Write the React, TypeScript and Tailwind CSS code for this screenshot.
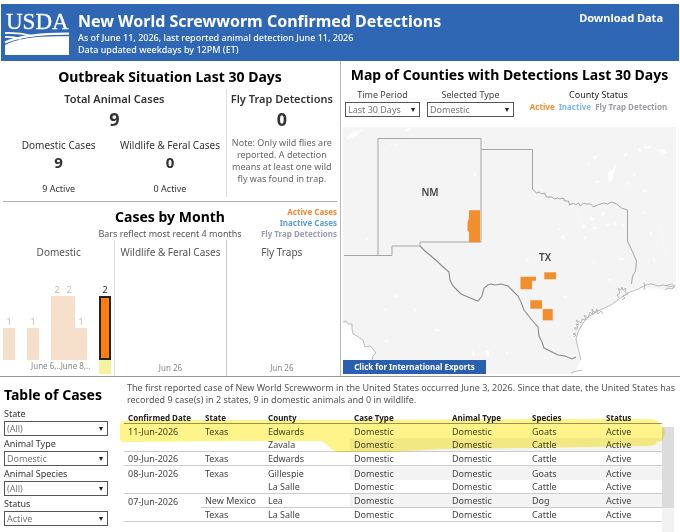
import React from "react";

const active = "#f28e2b";

const bars = [
  { day: "June 3", count: 1 },
  { day: "June 4", count: 0 },
  { day: "June 5", count: 1 },
  { day: "June 6", count: 0 },
  { day: "June 7", count: 2 },
  { day: "June 8", count: 2 },
  { day: "June 9", count: 1 },
  { day: "June 10", count: 0 },
  { day: "June 11", count: 2, selected: true },
];

const rows = [
  { date: "11-Jun-2026", state: "Texas", county: "Edwards", species: "Goats", line: "none" },
  { date: "", state: "", county: "Zavala", species: "Cattle", line: "full" },
  { date: "09-Jun-2026", state: "Texas", county: "Edwards", species: "Cattle", line: "full" },
  { date: "08-Jun-2026", state: "Texas", county: "Gillespie", species: "Goats", line: "none" },
  { date: "", state: "", county: "La Salle", species: "Cattle", line: "full" },
  { date: "07-Jun-2026", state: "New Mexico", county: "Lea", species: "Dog", line: "partial" },
  { date: "", state: "Texas", county: "La Salle", species: "Cattle", line: "full" },
];

const headings = ["Confirmed Date", "State", "County", "Case Type", "Animal Type", "Species", "Status"];

const tableFilters = [
  { id: "state", label: "State", value: "(All)" },
  { id: "animal-type", label: "Animal Type", value: "Domestic" },
  { id: "animal-species", label: "Animal Species", value: "(All)" },
  { id: "status", label: "Status", value: "Active" },
];

function Select({ id, value }: { id: string; value: string }) {
  return (
    <div className="relative">
      <select
        id={id}
        defaultValue={value}
        className="block h-[15px] w-full appearance-none rounded-none border border-[#555] bg-white pr-4 pl-[2px] text-[9px] leading-[13px] text-[#777]"
      >
        <option>{value}</option>
      </select>
      <svg viewBox="0 0 4 4" className="pointer-events-none absolute top-[6px] right-[5px] h-1 w-1">
        <path d="M0 0h4L2 4z" fill="#222" />
      </svg>
    </div>
  );
}

function Logo() {
  return (
    <svg viewBox="0 0 64 45" className="h-[45px] w-16 shrink-0 overflow-visible" role="img" aria-label="USDA">
      <text x="1" y="18" fill="#fff" stroke="#fff" strokeWidth="0.3" fontFamily="Liberation Serif, serif" fontSize="23">
        USDA
      </text>
      <path d="M0 34c12-6.500 31-9.500 64-8.700V44H0z" fill="#fff" />
      <g fill="none" stroke="#fff">
        <path d="M0 31.500C13 25.500 32 22.500 64 22.700" strokeWidth="2.200" />
        <path d="M0 22c11-.3 20 1 28 3" strokeWidth="1.800" />
        <path d="M0 26c6-.2 11 .5 16 2" strokeWidth="1.800" />
      </g>
    </svg>
  );
}

function Header() {
  return (
    <header className="mx-px mt-1 flex h-[57px] items-start bg-[#2f67b5] text-white">
      <div className="pt-[7px] pl-1">
        <Logo />
      </div>
      <div className="grow pt-[6px] pl-[9px]">
        <h1 className="text-[16px] leading-[22px] font-bold">New World Screwworm Confirmed Detections</h1>
        <p className="text-[9px] leading-[12px] font-medium">As of June 11, 2026, last reported animal detection June 11, 2026</p>
        <p className="text-[9px] leading-[12px] font-medium">Data updated weekdays by 12PM (ET)</p>
      </div>
      <a href="#download" className="pt-[6px] pr-4 text-[11px] leading-4 font-bold">
        Download Data
      </a>
    </header>
  );
}

function Outbreak() {
  return (
    <section className="mx-[3px] border-b border-[#b0b0b0] pt-1 pb-1 text-center text-[#333]">
      <h2 className="text-[14px] leading-6 font-bold text-black">Outbreak Situation Last 30 Days</h2>
      <div className="grid grid-cols-[2fr_1fr]">
        <div>
          <h3 className="text-[11px] leading-5 font-semibold">Total Animal Cases</h3>
          <p className="text-[18px] leading-5 font-bold">9</p>
          <div className="mt-2 grid grid-cols-2">
            <div>
              <h4 className="text-[10px] leading-4">Domestic Cases</h4>
              <p className="text-[15px] leading-[18px] font-bold">9</p>
              <p className="mt-[10px] text-[9px] leading-4">9 Active</p>
            </div>
            <div>
              <h4 className="text-[10px] leading-4">Wildlife &amp; Feral Cases</h4>
              <p className="text-[15px] leading-[18px] font-bold">0</p>
              <p className="mt-[10px] text-[9px] leading-4">0 Active</p>
            </div>
          </div>
        </div>
        <div className="border-l border-[#ddd]">
          <h3 className="text-[11px] leading-5 font-semibold whitespace-nowrap">Fly Trap Detections</h3>
          <p className="text-[18px] leading-5 font-bold">0</p>
          <p className="mt-2 px-1 text-[9px] leading-[12px] text-[#666]">
            Note: Only wild flies are reported. A detection means at least one wild fly was found in trap.
          </p>
        </div>
      </div>
    </section>
  );
}

function CasesByMonth() {
  return (
    <section className="mx-[3px] text-[#555]">
      <div className="grid grid-cols-[1fr_auto_1fr]">
        <div className="col-start-2 pt-1 text-center">
          <h2 className="text-[14px] leading-[22px] font-bold text-black">Cases by Month</h2>
          <p className="text-[9px] leading-[12px]">Bars reflect most recent 4 months</p>
        </div>
        <ul className="pt-1 text-right text-[8px] leading-[11px] font-bold whitespace-nowrap">
          <li className="text-[#f58634]">Active Cases</li>
          <li className="text-[#5a9fd0]">Inactive Cases</li>
          <li className="text-[#9a9db0]">Fly Trap Detections</li>
        </ul>
      </div>
      <div className="grid h-[136px] grid-cols-3 text-center">
        <div className="flex flex-col">
          <h3 className="pt-1 text-[10px] leading-4">Domestic</h3>
          <div className="flex grow items-end">
            {bars.map((bar) => (
              <div key={bar.day} className="w-3 shrink-0">
                {bar.count > 0 && (
                  <>
                    <p className={bar.selected ? "text-[9px] leading-3 text-[#222]" : "text-[9px] leading-3 text-[#bbb]"}>{bar.count}</p>
                    <div
                      className={bar.selected ? "border-2 border-[#222] bg-[#ff7f0e]" : "bg-[#f6dfcb]"}
                      style={{ height: bar.count * 32 }}
                    />
                  </>
                )}
              </div>
            ))}
          </div>
          <div className="flex h-4 justify-between pr-[3px] pl-7 text-[8px] leading-3 text-[#888]">
            <span className="whitespace-nowrap">June 6,..June 8,..</span>
            <span className="h-[14px] w-3 bg-[#f5f3a0]" />
          </div>
        </div>
        <div className="flex flex-col justify-between border-l border-[#ddd]">
          <h3 className="pt-1 text-[10px] leading-4">Wildlife &amp; Feral Cases</h3>
          <p className="pb-[2px] text-[8px] leading-[13px] text-[#888]">Jun 26</p>
        </div>
        <div className="flex flex-col justify-between border-l border-[#ccc]">
          <h3 className="pt-1 text-[10px] leading-4">Fly Traps</h3>
          <p className="pb-[2px] text-[8px] leading-[13px] text-[#888]">Jun 26</p>
        </div>
      </div>
    </section>
  );
}

function CountyMap() {
  return (
    <svg viewBox="0 0 333 247" className="block w-full bg-[#f4f4f4]" role="img" aria-label="Map of counties with detections">
      {/* Gulf and Pacific water */}
      <path
        d="M336 163l-8-1-6 1-12-2-8 1-7-2-19 12-12 8-20 11-9 15-2 7 2 12 3 9-3 5-5 8-3 1h109z"
        fill="#fff"
      />
      <path d="M0 195l8 2 2 9 10 7 2 7 8 1 3 5-4 7v14H0z" fill="#fff" />
      {/* lakes */}
      <g fill="#fff">
        <path d="M4 10l5-5 11-3-6 6-9 4zM42 16l9 2 8-2-7 3zM62 3l7-3-3 5zM131 46l2 2-2 1zM14 54h4v1zM23 110l3 2-3 1zM67 89l1 4-1-2z" />
        <path d="M265 46l5-4 3-5-2 10-3 8-3-2zM281 27l4-2-3 6zM295 24l2-4 2 5zM299 20l7-1 3 2-5 1zM311 20l5 3 6-1 2 5-6-2zM244 37l3-2-1 3zM250 30l4-1-2 3zM252 55l5-2-3 3zM282 57l5-1-3 2zM289 48l4-3-2 4zM300 62l5 2-5 1zM258 87l4-3-1 5zM248 90l4 3-5 1zM239 98l4 1-3 3zM250 99l5 2-5 2zM262 98l4-1-2 3zM272 95l2 4-3-2zM280 97l3 3-4-1zM218 111l3-4 1 6zM215 101l4 1-3 1zM240 111l3-2-1 4zM300 83l3 5-3-2zM306 104l4 4-3-1z" />
        <path d="M52 167l3 3-3 1zM71 182l4 1-3 1zM91 202l7 1-4 1zM42 213l4 1-3 1zM129 223l3 4-2 3zM143 224h3v6h-2zM183 133l3-2-1 3zM249 133l4 4-3-1zM276 131l6 1-4 1zM287 120l3 4-2-1zM222 138l3 3-2-1zM311 130l2 6-3-3zM265 151l4 2-3 1zM221 168l3 2-3 1zM207 229l4 1-3 1zM42 181l2 4-3-2zM164 223l1 4-2-1z" />
      </g>
      {/* rivers */}
      <g fill="none" stroke="#f8f8f8" strokeWidth="0.8">
        <path d="M1 15l7-8 10-3M190 86l11 12 9 7M229 72l9 22 9 11M263 110l12 23 17 20M300 77l11 12 8 18 4 21M298 126l11 14 13 11M218 125l18 15 12 17" />
      </g>
      {/* coast */}
      <g fill="none" stroke="#aaa" strokeWidth="0.8">
        <path d="M0 195l3-1 2 3 4 0 0 5 1 5 4 2 6 4 2 7 5-1 3 3 3 4-3 3-1 4" />
        <path d="M238 233l-3-12-2-9 2-7 5-9 5-6 10-6 13-6 8-6 9-6 10-4 4-2 4-2 5-1 4 1 3 1 5-1 5 1 6 1" />
        <path d="M234 203l-3-2 4 0-2-4 3 1-3-5 5 3 1-4 4 1-2-5 4 3 2-6 3 3-1-6 3 4 2-4 1 5 3-3 2 3M276 171l-2-3 3-2-2-5 3 2 1-3 1 3 3-2-1 4 3 2-5 2 2 2-3 2M300 156l2 1-1 6M322 159l6-2 4 2-3 3-4-1-3 2M233 206l-3 1 3 1-2 2M239 243l-9 2-2 1" />
      </g>
      {/* state lines */}
      <g fill="none" stroke="#a5a5a5" strokeWidth="1">
        <path d="M35 129V11.500H138V115H77l0 4H49v9.500H1M138 22.500h51.500V62l4 4 3-1 2 2 3-1 2 4 5 0 3 2 3-1 2 1 4-1 1 3 4 0 1 4 4-2 2 2 3-2 2 3 3-3 3 1 4 0 3 3 4-2 6-2 4 1 4-2 5 2 5 4 6 2 0 31 6 13 3 7-1 10-3 5-1 8" />
      </g>
      <path
        d="M77 119l5 5 6 5 6 5 5 5 7 6 1 8 3 6 3 3 5 5 7 3 7 3 3 1 4-5 2-8 4-3 3-1 4 1 6-1 7 2 4 4 6 6 3 6 3 8 7 9 7 8 1 9 3 6 2 6 8 4 6 3 7 1 7 3 4-2"
        fill="none"
        stroke="#8a8a8a"
        strokeWidth="1.100"
      />
      {/* counties */}
      <g fill={active}>
        <path d="M126 83.300h11v32h-11v-10l-1.500-2v-8l1.500-4z" />
        <path d="M177.500 149.700H193v4h-4v8.600h-11.500z" />
        <path d="M201.300 145.300H213v7h-11.700z" />
        <path d="M187.300 173.300H199v8.400h-11.700z" />
        <path d="M199.700 182h10v11.400h-10z" />
      </g>
      <g fill="#444" fontFamily="Noto Sans, sans-serif" fontSize="10" fontWeight="600" textAnchor="middle">
        <text x="87" y="69">NM</text>
        <text x="202" y="134">TX</text>
      </g>
    </svg>
  );
}

function MapPanel() {
  return (
    <section className="border-l border-[#bbb] pt-[2px] pr-1 pb-[2px] pl-[2px]">
      <h2 className="text-center text-[14px] leading-6 font-bold whitespace-nowrap text-black">
        Map of Counties with Detections Last 30 Days
      </h2>
      <div className="flex items-start gap-[7px] pl-[2px] text-center text-[9px] text-[#444]">
        <div className="w-[75px]">
          <label htmlFor="time-period" className="block leading-[15px]">Time Period</label>
          <Select id="time-period" value="Last 30 Days" />
        </div>
        <div className="w-[87px]">
          <label htmlFor="selected-type" className="block leading-[15px]">Selected Type</label>
          <Select id="selected-type" value="Domestic" />
        </div>
        <div className="grow">
          <p className="leading-[15px] text-[#222]">County Status</p>
          <p className="flex justify-center gap-1 text-[8px] leading-[10px] font-bold whitespace-nowrap">
            <span className="text-[#f28e2b]">Active</span>
            <span className="text-[#7fb8e6]">Inactive</span>
            <span className="text-[#999ca3]">Fly Trap Detection</span>
          </p>
        </div>
      </div>
      <div className="relative mt-[10px]">
        <CountyMap />
        <a
          href="#exports"
          className="absolute bottom-0 left-0 w-[143px] bg-[#2a5fb0] text-center text-[8px] leading-[14px] font-bold text-white"
        >
          Click for International Exports
        </a>
      </div>
    </section>
  );
}

function CasesTable() {
  return (
    <div className="relative flex grow">
      <table className="w-full table-fixed border-separate border-spacing-0 self-start text-left text-[9px] text-[#444]">
        <colgroup>
          <col className="w-[77px]" />
          <col className="w-[63px]" />
          <col className="w-[86px]" />
          <col className="w-[98px]" />
          <col className="w-[80px]" />
          <col className="w-[74px]" />
          <col className="w-[60px]" />
        </colgroup>
        <thead>
          <tr>
            {headings.map((heading) => (
              <th key={heading} className="h-[11px] border-b border-[#999] px-1 py-0 text-[8px] leading-[10px] font-bold whitespace-nowrap text-[#222]">
                {heading}
              </th>
            ))}
          </tr>
        </thead>
        <tbody>
          {rows.map((row, i) => {
            const line = row.line === "none" ? "" : " border-b border-[#ccc]";
            const dateLine = row.line === "full" ? line : "";
            const band = i % 2 === 1 ? " bg-[#f3f3f3]" : "";
            return (
              <tr key={i} className="leading-[13px]">
                <td className={"h-[14px] px-1 py-0" + dateLine}>{row.date}</td>
                <td className={"px-1 py-0" + line}>{row.state}</td>
                <td className={"px-1 py-0" + line}>{row.county}</td>
                <td className={"px-1 py-0" + line + band}>Domestic</td>
                <td className={"px-1 py-0" + line + band}>Domestic</td>
                <td className={"px-1 py-0" + line + band}>{row.species}</td>
                <td className={"px-1 py-0" + line + band}>Active</td>
              </tr>
            );
          })}
        </tbody>
      </table>
      <div className="mt-[14px] h-[105px] w-3 shrink-0 bg-[#f2f2f2]">
        <div className="h-[81px] bg-[#dcdcdc]" />
      </div>
      {/* marker stroke over the newest cases */}
      <svg
        viewBox="0 0 544 34"
        preserveAspectRatio="none"
        className="pointer-events-none absolute top-[6px] right-[9px] -left-1 h-[34px] w-[calc(100%-5px)] mix-blend-multiply"
      >
        <path
          d="M2 2l10-1h200L420 0h110q7 1 10 6l4 6-2 9q-3 2-6 2-2 4-8 4L410 29l-90 1-50 3h-52q-8-2-12-8l-5-3-80 0-119 1q-3-2-2-7l-1-8z"
          fill="#fef48a"
        />
      </svg>
    </div>
  );
}

export default function App() {
  return (
    <div className="overflow-hidden bg-white font-['Noto_Sans',sans-serif]">
      <Header />
      <main>
        <div className="grid grid-cols-2 border-b border-[#999]">
          <div>
            <Outbreak />
            <CasesByMonth />
          </div>
          <MapPanel />
        </div>
        <div className="flex gap-4 pr-[6px] pl-1">
          <aside className="w-[104px] shrink-0 pt-[6px]">
            <h2 className="text-[14px] leading-6 font-bold whitespace-nowrap text-black">Table of Cases</h2>
            <div className="flex flex-col gap-px">
              {tableFilters.map((filter) => (
                <div key={filter.id}>
                  <label htmlFor={filter.id} className="block text-[9px] leading-[14px] text-[#333]">
                    {filter.label}
                  </label>
                  <Select id={filter.id} value={filter.value} />
                </div>
              ))}
            </div>
          </aside>
          <section className="grow pt-[5px]">
            <p className="-mr-[6px] pb-[7px] pl-[3px] text-[9px] leading-[12px] text-[#555]">
              The first reported case of New World Screwworm in the United States occurred June 3, 2026. Since that date, the United States has recorded 9 case(s) in 2 states, 9 in domestic animals and 0 in wildlife.
            </p>
            <CasesTable />
          </section>
        </div>
      </main>
    </div>
  );
}
